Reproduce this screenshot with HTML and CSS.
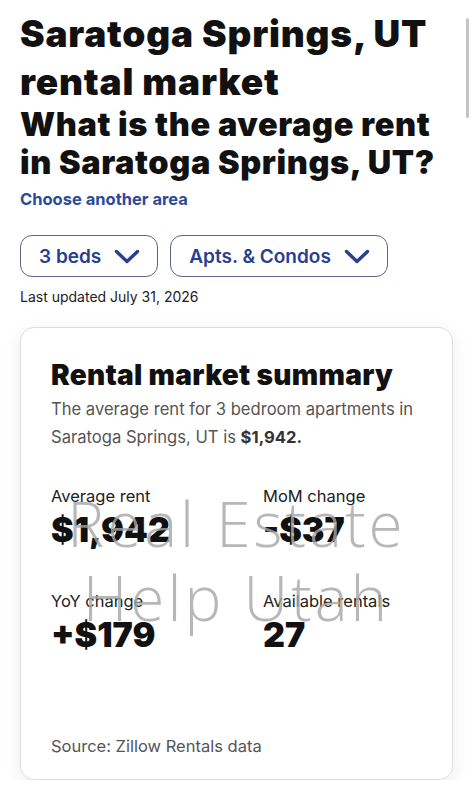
FILE: index.html
```html
<!DOCTYPE html>
<html lang="en">
<head>
  <meta charset="UTF-8">
  <meta name="viewport" content="width=device-width, initial-scale=1.0">
  <title>Saratoga Springs, UT rental market</title>
  <link rel="stylesheet" href="styles.css">
</head>
<body>
  <div class="scrollbar"></div>
  <h1>Saratoga Springs, UT rental market</h1>
  <h2>What is the average rent in Saratoga Springs, UT?</h2>
  <a class="area-link" href="#">Choose another area</a>

  <div class="filters">
    <button class="pill">3 beds
      <svg width="26" height="15" viewBox="0 0 26 15"><path d="M2.5 2.5 L13 12.5 L23.5 2.5" fill="none" stroke="currentColor" stroke-width="3.4" stroke-linecap="round" stroke-linejoin="round"/></svg>
    </button>
    <button class="pill">Apts. &amp; Condos
      <svg width="26" height="15" viewBox="0 0 26 15"><path d="M2.5 2.5 L13 12.5 L23.5 2.5" fill="none" stroke="currentColor" stroke-width="3.4" stroke-linecap="round" stroke-linejoin="round"/></svg>
    </button>
  </div>
  <p class="updated">Last updated July 31, 2026</p>

  <div class="card">
    <h3>Rental market summary</h3>
    <p class="summary">The average rent for 3 bedroom apartments in Saratoga Springs, UT is <b>$1,942.</b></p>

    <div class="stats">
      <div class="stat">
        <div class="label">Average rent</div>
        <div class="value">$1,942</div>
      </div>
      <div class="stat">
        <div class="label">MoM change</div>
        <div class="value">-$37</div>
      </div>
      <div class="stat">
        <div class="label">YoY change</div>
        <div class="value">+$179</div>
      </div>
      <div class="stat">
        <div class="label">Available rentals</div>
        <div class="value">27</div>
      </div>
    </div>

    <p class="source">Source: Zillow Rentals data</p>

    <div class="watermark">Real Estate<br>Help Utah</div>
  </div>
</body>
</html>
```

FILE: styles.css
```css
body {
  margin: 0;
  padding: 10px 20px 0;
  font-family: Inter, "Noto Sans", sans-serif;
  color: #111;
  background: #fff;
}
.scrollbar {
  position: fixed;
  top: 18px;
  right: 4px;
  width: 3px;
  height: 100px;
  border-radius: 2px;
  background: #c4c4c4;
}
h1 {
  margin: 0;
  font-size: 37px;
  line-height: 48px;
  font-weight: 900;
  letter-spacing: 0.8px;
}
h2 {
  margin: 0;
  font-size: 32.5px;
  line-height: 38px;
  font-weight: 900;
  letter-spacing: 0.6px;
}
.area-link {
  display: block;
  margin-top: 5px;
  font-size: 16.5px;
  line-height: 24px;
  font-weight: 700;
  color: #2c4a9a;
  text-decoration: none;
}
.filters {
  display: flex;
  gap: 12px;
  margin-top: 24px;
}
.pill {
  display: flex;
  align-items: center;
  gap: 13px;
  height: 42px;
  padding: 0 17px 0 18px;
  border: 1.5px solid #5b6287;
  border-radius: 12px;
  background: #fff;
  font-family: inherit;
  font-size: 19px;
  font-weight: 600;
  color: #29408f;
}
.updated {
  margin: 10px 0 0;
  font-size: 14px;
  line-height: 20px;
  color: #222;
}
.card {
  position: relative;
  margin-top: 20px;
  padding: 30px 30px 22px;
  border: 1px solid #ddd;
  border-radius: 14px;
  box-shadow: 0 4px 18px rgba(0, 0, 0, 0.08);
  overflow: hidden;
}
h3 {
  margin: 0;
  font-size: 28px;
  line-height: 34px;
  font-weight: 900;
  letter-spacing: 0.3px;
}
.summary {
  margin: 3px 0 0;
  font-size: 16.6px;
  line-height: 28px;
  color: #555;
}
.summary b {
  color: #333;
}
.stats {
  display: grid;
  grid-template-columns: 212px 1fr;
  row-gap: 40px;
  margin-top: 34px;
}
.label {
  font-size: 16.5px;
  line-height: 22px;
  color: #222;
}
.value {
  margin-top: 3px;
  font-size: 34px;
  line-height: 40px;
  font-weight: 900;
}
.source {
  margin: 80px 0 0;
  font-size: 16.5px;
  line-height: 22px;
  color: #555;
}
.watermark {
  position: absolute;
  top: 158px;
  left: 0;
  right: 0;
  text-align: center;
  font-family: "Open Sans", Roboto, sans-serif;
  font-weight: 300;
  font-size: 62px;
  line-height: 74px;
  letter-spacing: 3px;
  color: rgba(165, 165, 165, 0.8);
  pointer-events: none;
}
```
